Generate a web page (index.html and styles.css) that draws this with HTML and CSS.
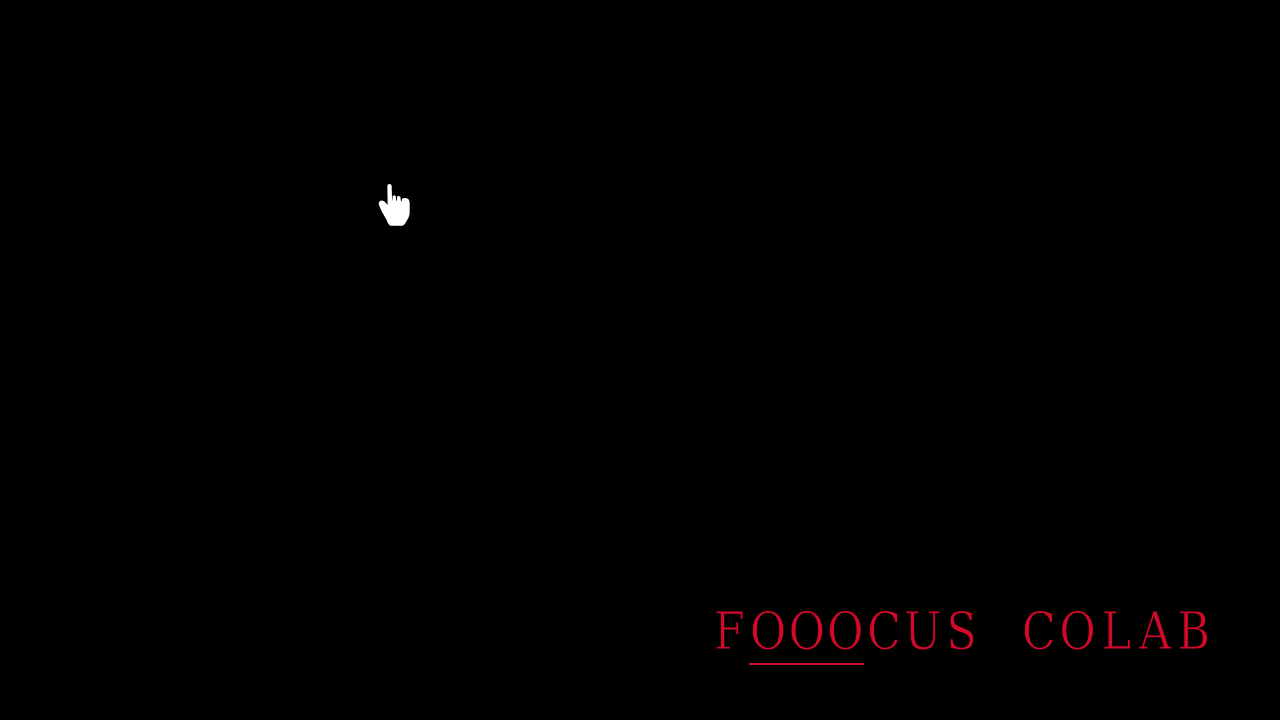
FILE: index.html
```html
<!DOCTYPE html>
<html lang="en">
<head>
  <meta charset="UTF-8">
  <title>Fooocus Colab</title>
  <link rel="stylesheet" href="styles.css">
</head>
<body>
  <svg class="cursor" viewBox="0 0 210 210" aria-hidden="true">
    <path class="hand" d="M82 48Q82 42 88 42Q95 42 95 48L96 84L97 92L98 78Q102 74 107 78L109 92L111 92L111 80Q116 76 121 80L123 94L125 94L126 86Q136 82 145 87Q149 92 149 100L149 132Q146 146 138 156Q135 164 128 167L92 167Q84 164 80 150L66 126L57 106Q54 96 62 92Q70 90 75 96L83 104Z"/>
  </svg>
  <div class="caption">
    <div class="title">
      <span>F</span><span>O</span><span>O</span><span>O</span><span>C</span><span>U</span><span>S</span><span> </span><span>C</span><span>O</span><span>L</span><span>A</span><span>B</span>
    </div>
    <div class="underline"></div>
  </div>
</body>
</html>
```

FILE: styles.css
```css
html, body {
  height: 100%;
}

body {
  margin: 0;
  background: #000;
  display: flex;
  flex-direction: column;
  justify-content: flex-end;
  align-items: flex-end;
  overflow: hidden;
}

.cursor {
  position: absolute;
  left: 360px;
  top: 170px;
  width: 70px;
  height: 70px;
}

.hand {
  fill: #fff;
}

.caption {
  width: 497px;
  padding: 0 69px 55px 0;
}

.title {
  display: flex;
  width: 585px;
  margin-left: -4px;
  font-family: "DejaVu Serif", serif;
  font-size: 52px;
  line-height: 64px;
  color: #d4082a;
  -webkit-text-stroke: 1px #000;
  transform: scaleX(0.86);
  transform-origin: left;
}

.title span {
  flex: 0 0 45px;
  text-align: center;
  white-space: pre;
}

.underline {
  width: 115px;
  height: 2px;
  margin: 0 0 0 35px;
  background: #c8102e;
}
```
